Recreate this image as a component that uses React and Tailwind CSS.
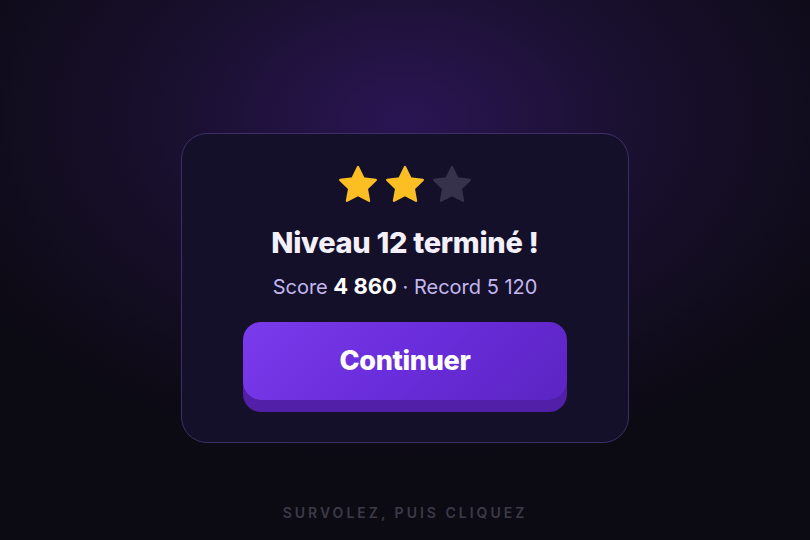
import React from "react";

function Star({ color }) {
  return (
    <svg width="46" height="46" viewBox="0 0 24 24" aria-hidden="true">
      <path
        d="M12 2.6l2.85 5.9 6.45.85-4.72 4.5 1.18 6.4L12 17.15 6.24 20.25l1.18-6.4L2.7 9.35l6.45-.85z"
        fill={color}
        stroke={color}
        strokeWidth="1.2"
        strokeLinejoin="round"
      />
    </svg>
  );
}

export default function App() {
  return (
    <div
      className="relative h-[540px] w-[810px] overflow-hidden bg-[#0c0a13] flex flex-col items-center"
      style={{ fontFamily: "Inter, 'Noto Sans', sans-serif" }}
    >
      <div className="absolute inset-0 bg-[radial-gradient(ellipse_500px_340px_at_50%_22%,#2a1553_0%,#1a1030_45%,#0c0a13_100%)]" />
      <div className="relative mt-[133px] w-[448px] h-[310px] rounded-[26px] border border-[#3b3066] bg-[#14102a] flex flex-col items-center pt-[28px]">
        <div className="flex items-center gap-[1px]">
          <Star color="#fbbf24" />
          <Star color="#fbbf24" />
          <Star color="#37324b" />
        </div>
        <div className="mt-[17px] text-[29px] leading-[36px] font-extrabold tracking-[-0.3px] text-[#f3f0fb]">
          Niveau 12 terminé !
        </div>
        <div className="mt-[11px] text-[20px] leading-[28px] text-[#c3b7ee]">
          Score <span className="font-bold text-[22px] text-white">4 860</span> · Record 5 120
        </div>
        <button className="mt-[21px] w-[324px] h-[78px] rounded-[18px] bg-[linear-gradient(135deg,#7a3bec_0%,#6a2ddb_50%,#5b24c2_100%)] shadow-[0_12px_0_#5220a8] text-white text-[27px] font-extrabold tracking-[-0.3px] flex items-center justify-center">
          Continuer
        </button>
      </div>
      <div className="relative mt-[59px] text-[14px] font-semibold tracking-[3px] text-[#3c3a47]">
        SURVOLEZ, PUIS CLIQUEZ
      </div>
    </div>
  );
}
